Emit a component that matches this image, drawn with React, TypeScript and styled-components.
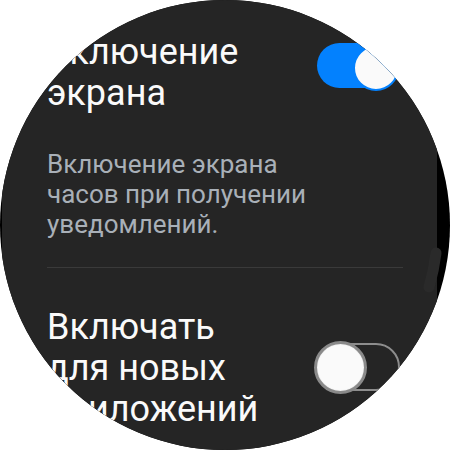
import styled, { createGlobalStyle } from "styled-components";

const GlobalStyle = createGlobalStyle`
  html, body {
    margin: 0;
    padding: 0;
    background: #ffffff;
  }
  * {
    box-sizing: border-box;
  }
`;

const Watch = styled.div`
  position: relative;
  width: 450px;
  height: 450px;
  border-radius: 50%;
  overflow: hidden;
  background: #000;
  font-family: Roboto, "Noto Sans", "Liberation Sans", sans-serif;
`;

const Screen = styled.div`
  margin-left: 2px;
  width: 435px;
  height: 450px;
  background: #252525;
  padding: 32px 34px 0 45px;
  display: flex;
  flex-direction: column;
`;

const Row = styled.div`
  display: flex;
  justify-content: space-between;
  align-items: flex-start;
`;

const Title = styled.div`
  width: 220px;
  font-size: 36px;
  line-height: 41px;
  color: #fafafa;
`;

const Description = styled.div`
  margin-top: 35px;
  width: 285px;
  font-size: 26px;
  line-height: 30px;
  color: #a9b0b8;
`;

const Divider = styled.div`
  margin-top: 28px;
  height: 1px;
  background: #3a3a3a;
`;

const Spacer = styled.div<{ $h: number }>`
  height: ${(p) => p.$h}px;
  flex: none;
`;

const Track = styled.div<{ $on: boolean; $offset: number }>`
  position: relative;
  flex: none;
  margin-top: ${(p) => p.$offset}px;
  margin-right: 3px;
  width: ${(p) => (p.$on ? 83 : 82)}px;
  height: ${(p) => (p.$on ? 45 : 48)}px;
  border-radius: 24px;
  background: ${(p) => (p.$on ? "#0381fe" : "transparent")};
  border: ${(p) => (p.$on ? "none" : "2px solid #8d8d8d")};
`;

const Knob = styled.div<{ $on: boolean }>`
  position: absolute;
  border-radius: 50%;
  background: #fafafa;
  ${(p) =>
    p.$on
      ? `
    left: 36px;
    top: 2px;
    width: 46px;
    height: 46px;
    border: 2px solid #0381fe;
  `
      : `
    left: -6px;
    top: -4px;
    width: 53px;
    height: 53px;
    border: 3px solid #8a8a8a;
    box-shadow: inset 0 0 1px #bbb;
  `}
`;

const ScrollMark = styled.svg`
  position: absolute;
  left: 0;
  top: 0;
  width: 450px;
  height: 450px;
  pointer-events: none;
`;

function Toggle({ on, offset }: { on: boolean; offset: number }) {
  return (
    <Track $on={on} $offset={offset}>
      <Knob $on={on} />
    </Track>
  );
}

export default function App() {
  return (
    <>
      <GlobalStyle />
      <Watch>
        <Screen>
          <Row>
            <Title>Включение экрана</Title>
            <Toggle on offset={11} />
          </Row>
          <Description>
            Включение экрана часов при получении уведомлений.
          </Description>
          <Divider />
          <Spacer $h={39} />
          <Row>
            <Title>Включать для новых приложений</Title>
            <Toggle on={false} offset={36} />
          </Row>
        </Screen>
        <ScrollMark viewBox="0 0 450 450">
          <path
            d="M 436 253 A 212 212 0 0 1 429 287"
            fill="none"
            stroke="#2a2a2a"
            strokeWidth="11"
            strokeLinecap="round"
          />
        </ScrollMark>
      </Watch>
    </>
  );
}
